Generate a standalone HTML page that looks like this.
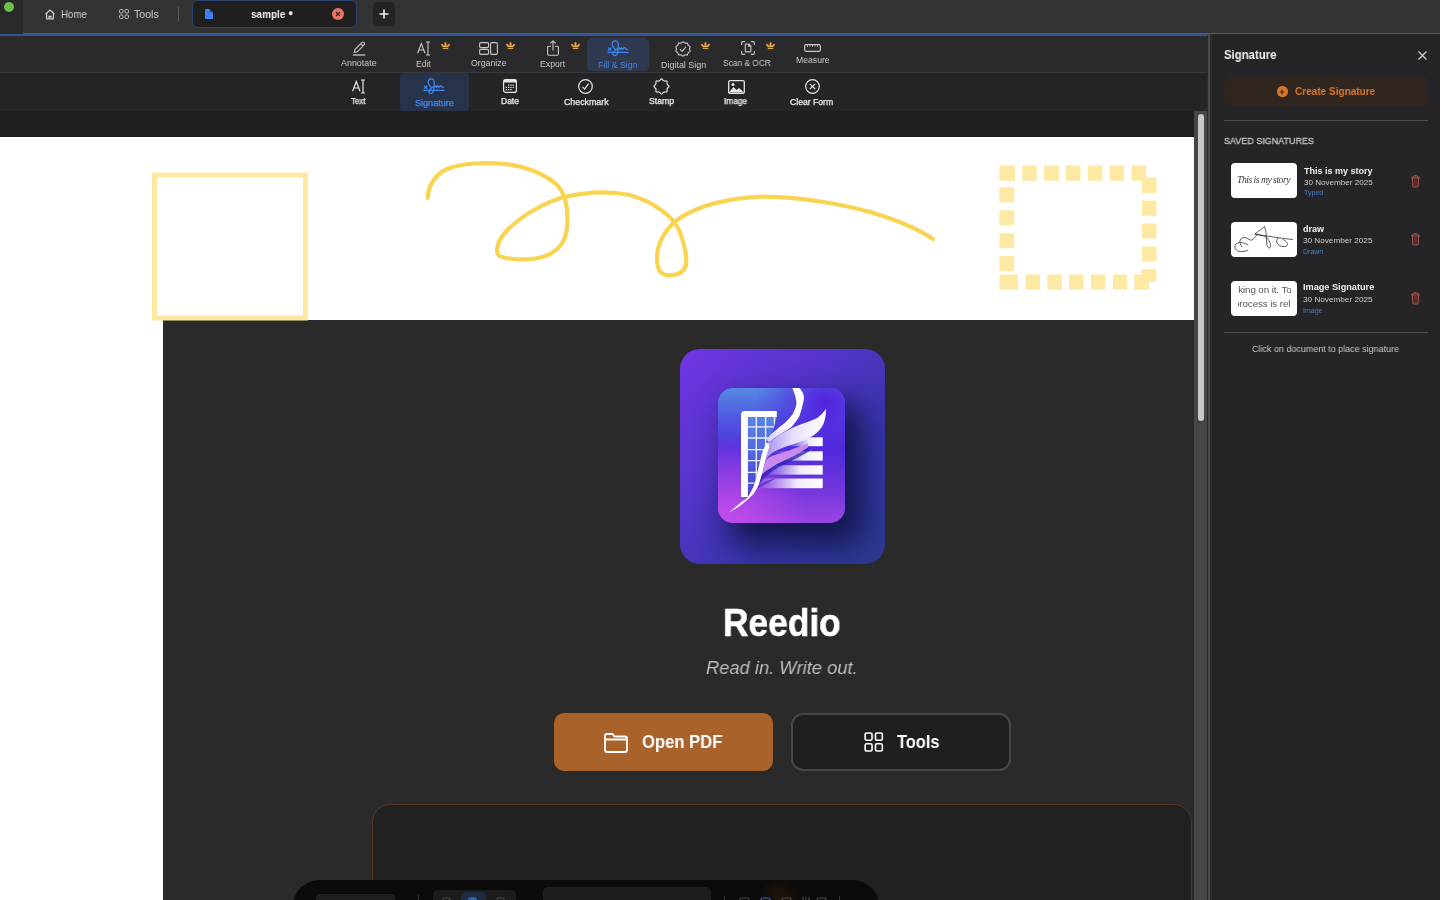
<!DOCTYPE html>
<html><head><meta charset="utf-8">
<style>
*{margin:0;padding:0;box-sizing:border-box}
html,body{width:1440px;height:900px;overflow:hidden;background:#2a2a2a;font-family:"Liberation Sans",sans-serif}
.a{position:absolute}
.t{position:absolute;white-space:nowrap;line-height:1;will-change:transform}
.c{transform:translateX(-50%)}
svg{position:absolute;overflow:visible}
</style></head><body>

<!-- ===== TAB BAR ===== -->
<div class="a" style="left:0;top:0;width:1440px;height:33px;background:#333334"></div>
<div class="a" style="left:0;top:0;width:23px;height:34px;background:#2a2a2a"></div>
<div class="a" style="left:4px;top:2px;width:10px;height:10px;border-radius:50%;background:#6bc04a"></div>
<div class="a" style="left:23px;top:33px;width:1417px;height:1px;background:#5a5a5a"></div>
<div class="a" style="left:0;top:34px;width:1208px;height:2px;background:#2d5598"></div>

<!-- home -->
<svg style="left:44px;top:9px" width="12" height="11" viewBox="0 0 12 11"><path d="M1.5 5.2 L6 1 L10.5 5.2 M2.6 4.3 V10 H9.4 V4.3 M5 10 V7.3 H7 V10 M8.6 2.2 V3.6" fill="none" stroke="#cfcfcf" stroke-width="1.2"/></svg>
<div class="t" id="T_home" style="left:61.33px;top:9.04px;font-size:10.5px;color:#cfcfcf;transform:scaleX(0.9220);transform-origin:0 0">Home</div>
<!-- tools -->
<svg style="left:119px;top:9px" width="10" height="10" viewBox="0 0 10 10"><g fill="none" stroke="#bdbdbd" stroke-width="1"><rect x="0.5" y="0.5" width="3.5" height="3.5" rx="1"/><rect x="6" y="0.5" width="3.5" height="3.5" rx="1"/><rect x="0.5" y="6" width="3.5" height="3.5" rx="1"/><rect x="6" y="6" width="3.5" height="3.5" rx="1"/></g></svg>
<div class="t" id="T_tools" style="left:134.09px;top:9.04px;font-size:10.5px;color:#cfcfcf;transform:scaleX(1.0099);transform-origin:0 0">Tools</div>
<div class="a" style="left:178px;top:7px;width:1px;height:14px;background:#5a5a5a"></div>

<!-- active tab -->
<div class="a" style="left:192px;top:0;width:165px;height:28px;border-radius:6px;background:#1f1f20;border:1px solid #2b4570"></div>
<svg style="left:205px;top:9px" width="8" height="10" viewBox="0 0 8 10"><path d="M0 0.8 Q0 0 0.8 0 H4.6 L8 3.4 V9.2 Q8 10 7.2 10 H0.8 Q0 10 0 9.2 Z" fill="#3a82f5"/><path d="M4.6 0 V3.4 H8" fill="#1f1f20" opacity="0.5"/></svg>
<div class="t" id="T_sample" style="left:251.30px;top:9.06px;font-size:11px;font-weight:bold;color:#f0f0f0;transform:scaleX(0.9077);transform-origin:0 0">sample <span style="font-size:9px;position:relative;top:-2px">●</span></div>
<div class="a" style="left:332px;top:8px;width:12px;height:12px;border-radius:50%;background:#ee7466"></div>
<svg style="left:335px;top:11px" width="6" height="6" viewBox="0 0 6 6"><path d="M1 1 L5 5 M5 1 L1 5" stroke="#3a1a18" stroke-width="1.3"/></svg>
<div class="a" style="left:373px;top:2px;width:22px;height:24px;border-radius:5px;background:#232323"></div>
<svg style="left:379px;top:9px" width="10" height="10" viewBox="0 0 10 10"><path d="M5 0.5 V9.5 M0.5 5 H9.5" stroke="#f0f0f0" stroke-width="1.6"/></svg>

<!-- ===== TOOLBAR ===== -->
<div class="a" style="left:0;top:36px;width:1208px;height:36px;background:#2a2a2c"></div>
<div class="a" style="left:0;top:72px;width:1208px;height:1px;background:#3a3a3c"></div>
<div class="a" style="left:0;top:73px;width:1208px;height:38px;background:#252527"></div>
<div class="a" style="left:0;top:111px;width:1194px;height:26px;background:#1f1f1f"></div>

<!-- row 1 -->
<div class="a" style="left:587px;top:38px;width:62px;height:33px;border-radius:5px;background:#2f3a50"></div>
<div id="row1">
<!-- annotate -->
<svg style="left:352px;top:41px" width="14" height="15" viewBox="0 0 14 15"><g fill="none" stroke="#c8c8c8" stroke-width="1.1" stroke-linejoin="round"><path d="M2.2 11.5 L3 8.3 L10 1.3 Q10.8 0.6 11.6 1.3 L12.4 2.1 Q13.1 2.9 12.4 3.7 L5.4 10.7 Z M8.7 2.6 L11.1 5"/><path d="M0.8 14 H13.2" stroke-width="1.3"/></g></svg>
<div class="t" id="T_annot" style="left:341.19px;top:58.95px;font-size:8.5px;color:#c8c8c8;transform:scaleX(1.0475);transform-origin:0 0">Annotate</div>
<!-- edit -->
<svg style="left:417px;top:41px" width="14" height="15" viewBox="0 0 14 15"><g fill="none" stroke="#c8c8c8" stroke-width="1.1"><path d="M0.6 12.3 L4.3 2.5 L8 12.3 M1.8 9 H6.8"/><path d="M11 1 V14 M9 1 H13 M9 14 H13"/></g></svg>
<div class="t" id="T_edit" style="left:416.20px;top:59.95px;font-size:8.5px;color:#c8c8c8;transform:scaleX(1.0000);transform-origin:0 0">Edit</div>
<!-- organize -->
<svg style="left:479px;top:42px" width="19" height="13" viewBox="0 0 19 13"><g fill="none" stroke="#c8c8c8" stroke-width="1.1"><rect x="0.6" y="0.6" width="9" height="5" rx="1.3"/><rect x="0.6" y="7.4" width="9" height="5" rx="1.3"/><rect x="11.6" y="0.6" width="6.8" height="11.8" rx="1.3"/></g></svg>
<div class="t" id="T_org" style="left:471.09px;top:59.15px;font-size:8.5px;color:#c8c8c8;transform:scaleX(1.0302);transform-origin:0 0">Organize</div>
<!-- export -->
<svg style="left:547px;top:40px" width="12" height="16" viewBox="0 0 12 16"><g fill="none" stroke="#c8c8c8" stroke-width="1.1" stroke-linejoin="round"><path d="M4 6.2 H1.8 Q0.6 6.2 0.6 7.4 V14 Q0.6 15.2 1.8 15.2 H10.2 Q11.4 15.2 11.4 14 V7.4 Q11.4 6.2 10.2 6.2 H8"/><path d="M6 10.5 V0.8 M3.3 3.4 L6 0.8 L8.7 3.4"/></g></svg>
<div class="t" id="T_export" style="left:540.32px;top:59.65px;font-size:8.5px;color:#c8c8c8;transform:scaleX(1.0248);transform-origin:0 0">Export</div>
<!-- fill & sign -->
<svg id="sig1" style="left:600px;top:36px" width="30" height="22" viewBox="0 0 30 22"><g fill="none" stroke="#3f87f0" stroke-width="1.25" stroke-linecap="round" stroke-linejoin="round"><path d="M8 16.4 H28"/><path d="M8.5 11.9 L10.9 14.3 M10.9 11.9 L8.5 14.3"/><path d="M15.6 13.7 C13.5 11.5 12 9.5 12.2 8.1 C12.3 5.5 13.5 4.8 15 4.8 C16.8 4.8 18.3 6.5 18.3 8.7 C18.3 11.5 18 14.5 17.8 15.3 C17.5 18 16.5 19.5 14.7 19.5 C13.3 19.5 12.8 18.3 13 17.6 C13.5 15.5 15.5 14 17.2 12.8 C18.2 12 19.5 11 20 13.2 C20.3 14.5 20.8 12 21.3 11.7 C22 11.3 22.2 13.5 22.5 13.5 C23 13.3 23.8 11.6 24.4 11.6 C25 11.7 25.5 13.2 26 13.2 C26.6 13.3 27 13.1 27.5 13.4"/></g></svg>
<div class="t" id="T_fill" style="left:598.48px;top:61.35px;font-size:8.5px;color:#3f87f0;transform:scaleX(1.0334);transform-origin:0 0">Fill &amp; Sign</div>
<!-- digital sign -->
<svg style="left:675px;top:40.5px" width="16" height="16" viewBox="0 0 16 16"><g fill="none" stroke="#c8c8c8" stroke-width="1.1" stroke-linejoin="round"><path d="M8 0.7 L10 2.1 L12.4 2 L13.2 4.3 L15.2 5.6 L14.5 8 L15.2 10.4 L13.2 11.7 L12.4 14 L10 13.9 L8 15.3 L6 13.9 L3.6 14 L2.8 11.7 L0.8 10.4 L1.5 8 L0.8 5.6 L2.8 4.3 L3.6 2 L6 2.1 Z"/><path d="M5 8.2 L7.1 10.3 L11 5.9"/></g></svg>
<div class="t" id="T_dig" style="left:660.56px;top:60.55px;font-size:8.5px;color:#c8c8c8;transform:scaleX(1.0515);transform-origin:0 0">Digital Sign</div>
<!-- scan -->
<svg style="left:741px;top:41px" width="14" height="14" viewBox="0 0 14 14"><g fill="none" stroke="#c8c8c8" stroke-width="1.1" stroke-linejoin="round"><path d="M0.6 4 V2 Q0.6 0.6 2 0.6 H4 M10 0.6 H12 Q13.4 0.6 13.4 2 V4 M13.4 10 V12 Q13.4 13.4 12 13.4 H10 M4 13.4 H2 Q0.6 13.4 0.6 12 V10"/><path d="M4.3 3.5 Q4.3 3 4.8 3 H7.8 L9.8 5 V10.3 Q9.8 10.9 9.2 10.9 H4.8 Q4.3 10.9 4.3 10.3 Z M7.6 3 V5.2 H9.8"/></g></svg>
<div class="t" id="T_scan" style="left:723.40px;top:58.65px;font-size:8.5px;color:#c8c8c8;transform:scaleX(0.9838);transform-origin:0 0">Scan &amp; OCR</div>
<!-- measure -->
<svg style="left:804px;top:44px" width="17" height="8" viewBox="0 0 17 8"><g fill="none" stroke="#c8c8c8" stroke-width="1.2"><rect x="0.7" y="0.7" width="15.6" height="6.6" rx="1.2"/><path d="M3.5 1 V3 M6 1 V2.6 M8.5 1 V3 M11 1 V2.6 M13.5 1 V3" stroke-width="0.8"/></g></svg>
<div class="t" id="T_meas" style="left:796.19px;top:55.85px;font-size:8.5px;color:#c8c8c8;transform:scaleX(1.0187);transform-origin:0 0">Measure</div>
<!-- crowns -->
<svg style="left:441.3px;top:41.9px" width="9" height="7.2" viewBox="0 0 9 7.2"><g fill="#e8a93e"><circle cx="0.9" cy="2.6" r="0.85"/><circle cx="4.5" cy="0.9" r="0.85"/><circle cx="8.1" cy="2.6" r="0.85"/><path d="M0.1 2.8 L1.7 2.4 L3.4 4 L3.65 0.9 H5.35 L5.6 4 L7.3 2.4 L8.9 2.8 L7.3 5.1 H1.7 Z"/><rect x="1.8" y="5.7" width="5.4" height="1.3"/></g></svg>
<svg style="left:506.2px;top:41.9px" width="9" height="7.2" viewBox="0 0 9 7.2"><g fill="#e8a93e"><circle cx="0.9" cy="2.6" r="0.85"/><circle cx="4.5" cy="0.9" r="0.85"/><circle cx="8.1" cy="2.6" r="0.85"/><path d="M0.1 2.8 L1.7 2.4 L3.4 4 L3.65 0.9 H5.35 L5.6 4 L7.3 2.4 L8.9 2.8 L7.3 5.1 H1.7 Z"/><rect x="1.8" y="5.7" width="5.4" height="1.3"/></g></svg>
<svg style="left:571.0px;top:41.9px" width="9" height="7.2" viewBox="0 0 9 7.2"><g fill="#e8a93e"><circle cx="0.9" cy="2.6" r="0.85"/><circle cx="4.5" cy="0.9" r="0.85"/><circle cx="8.1" cy="2.6" r="0.85"/><path d="M0.1 2.8 L1.7 2.4 L3.4 4 L3.65 0.9 H5.35 L5.6 4 L7.3 2.4 L8.9 2.8 L7.3 5.1 H1.7 Z"/><rect x="1.8" y="5.7" width="5.4" height="1.3"/></g></svg>
<svg style="left:700.9px;top:41.9px" width="9" height="7.2" viewBox="0 0 9 7.2"><g fill="#e8a93e"><circle cx="0.9" cy="2.6" r="0.85"/><circle cx="4.5" cy="0.9" r="0.85"/><circle cx="8.1" cy="2.6" r="0.85"/><path d="M0.1 2.8 L1.7 2.4 L3.4 4 L3.65 0.9 H5.35 L5.6 4 L7.3 2.4 L8.9 2.8 L7.3 5.1 H1.7 Z"/><rect x="1.8" y="5.7" width="5.4" height="1.3"/></g></svg>
<svg style="left:765.5px;top:41.9px" width="9" height="7.2" viewBox="0 0 9 7.2"><g fill="#e8a93e"><circle cx="0.9" cy="2.6" r="0.85"/><circle cx="4.5" cy="0.9" r="0.85"/><circle cx="8.1" cy="2.6" r="0.85"/><path d="M0.1 2.8 L1.7 2.4 L3.4 4 L3.65 0.9 H5.35 L5.6 4 L7.3 2.4 L8.9 2.8 L7.3 5.1 H1.7 Z"/><rect x="1.8" y="5.7" width="5.4" height="1.3"/></g></svg>
</div>

<!-- row 2 -->
<div class="a" style="left:400px;top:73px;width:68.5px;height:38px;border-radius:4px;background:#26334a"></div>
<!-- text -->
<svg style="left:352px;top:78.5px" width="14" height="15" viewBox="0 0 14 15"><g fill="none" stroke="#e6e6e6" stroke-width="1.2"><path d="M0.6 12.3 L4.3 2.5 L8 12.3 M1.8 9 H6.8"/><path d="M11 1 V14 M9 1 H13 M9 14 H13"/></g></svg>
<div class="t" id="T_text" style="left:351.33px;top:97.15px;font-size:8.5px;color:#ececec;transform:scaleX(0.9328);transform-origin:0 0;-webkit-text-stroke:0.25px currentColor">Text</div>
<!-- signature -->
<svg style="left:416.2px;top:74px" width="30" height="22" viewBox="0 0 30 22"><g fill="none" stroke="#3f87f0" stroke-width="1.25" stroke-linecap="round" stroke-linejoin="round"><path d="M8 16.4 H28"/><path d="M8.5 11.9 L10.9 14.3 M10.9 11.9 L8.5 14.3"/><path d="M15.6 13.7 C13.5 11.5 12 9.5 12.2 8.1 C12.3 5.5 13.5 4.8 15 4.8 C16.8 4.8 18.3 6.5 18.3 8.7 C18.3 11.5 18 14.5 17.8 15.3 C17.5 18 16.5 19.5 14.7 19.5 C13.3 19.5 12.8 18.3 13 17.6 C13.5 15.5 15.5 14 17.2 12.8 C18.2 12 19.5 11 20 13.2 C20.3 14.5 20.8 12 21.3 11.7 C22 11.3 22.2 13.5 22.5 13.5 C23 13.3 23.8 11.6 24.4 11.6 C25 11.7 25.5 13.2 26 13.2 C26.6 13.3 27 13.1 27.5 13.4"/></g></svg>
<div class="t" id="T_sig" style="left:415.10px;top:98.55px;font-size:8.5px;color:#3f87f0;transform:scaleX(1.0670);transform-origin:0 0;-webkit-text-stroke:0.25px currentColor">Signature</div>
<!-- date -->
<svg style="left:503px;top:79px" width="14" height="14" viewBox="0 0 14 14"><rect x="0.6" y="0.6" width="12.8" height="12.8" rx="2" fill="none" stroke="#e6e6e6" stroke-width="1.2"/><rect x="0.6" y="0.6" width="12.8" height="3" rx="1" fill="#e6e6e6"/><g fill="#e6e6e6"><rect x="5" y="5.5" width="1.3" height="1.2"/><rect x="7.3" y="5.5" width="1.3" height="1.2"/><rect x="9.6" y="5.5" width="1.3" height="1.2"/><rect x="2.7" y="7.8" width="1.3" height="1.2"/><rect x="5" y="7.8" width="1.3" height="1.2"/><rect x="7.3" y="7.8" width="1.3" height="1.2"/><rect x="9.6" y="7.8" width="1.3" height="1.2"/><rect x="2.7" y="10" width="1.3" height="1.2"/><rect x="5" y="10" width="1.3" height="1.2"/><rect x="7.3" y="10" width="1.3" height="1.2"/></g></svg>
<div class="t" id="T_date" style="left:501.10px;top:97.35px;font-size:8.5px;color:#ececec;transform:scaleX(1.0000);transform-origin:0 0;-webkit-text-stroke:0.25px currentColor">Date</div>
<!-- checkmark -->
<svg style="left:578px;top:78.5px" width="15" height="15" viewBox="0 0 15 15"><circle cx="7.5" cy="7.5" r="6.8" fill="none" stroke="#e6e6e6" stroke-width="1.2"/><path d="M4.5 7.8 L6.6 10 L10.6 4.6" fill="none" stroke="#e6e6e6" stroke-width="1.2"/></svg>
<div class="t" id="T_check" style="left:563.69px;top:97.55px;font-size:8.5px;color:#ececec;transform:scaleX(1.0370);transform-origin:0 0;-webkit-text-stroke:0.25px currentColor">Checkmark</div>
<!-- stamp -->
<svg style="left:652.6px;top:77.5px" width="17" height="17" viewBox="0 0 17 17"><path d="M7.45 1.76 Q8.50 0.10 9.55 1.76 Q10.60 3.42 12.52 2.99 Q14.44 2.56 14.01 4.48 Q13.58 6.40 15.24 7.45 Q16.90 8.50 15.24 9.55 Q13.58 10.60 14.01 12.52 Q14.44 14.44 12.52 14.01 Q10.60 13.58 9.55 15.24 Q8.50 16.90 7.45 15.24 Q6.40 13.58 4.48 14.01 Q2.56 14.44 2.99 12.52 Q3.42 10.60 1.76 9.55 Q0.10 8.50 1.76 7.45 Q3.42 6.40 2.99 4.48 Q2.56 2.56 4.48 2.99 Q6.40 3.42 7.45 1.76 Z" fill="none" stroke="#e6e6e6" stroke-width="1.2" stroke-linejoin="round"/></svg>
<div class="t" id="T_stamp" style="left:648.72px;top:97.45px;font-size:8.5px;color:#ececec;transform:scaleX(1.0248);transform-origin:0 0;-webkit-text-stroke:0.25px currentColor">Stamp</div>
<!-- image -->
<svg style="left:728px;top:79.5px" width="17" height="14" viewBox="0 0 17 14"><rect x="0.7" y="0.7" width="15.6" height="12.6" rx="1.3" fill="none" stroke="#e6e6e6" stroke-width="1.3"/><path d="M1 12.5 L5.5 7 L8.5 10 L11 8 L16 12.5 Z" fill="#e6e6e6"/><circle cx="5" cy="4.5" r="1.5" fill="#e6e6e6"/></svg>
<div class="t" id="T_image" style="left:724.48px;top:96.55px;font-size:8.5px;color:#ececec;transform:scaleX(0.9688);transform-origin:0 0;-webkit-text-stroke:0.25px currentColor">Image</div>
<!-- clear form -->
<svg style="left:804.5px;top:78.5px" width="15" height="15" viewBox="0 0 15 15"><circle cx="7.5" cy="7.5" r="6.8" fill="none" stroke="#e6e6e6" stroke-width="1.2"/><path d="M4.8 4.8 L10.2 10.2 M10.2 4.8 L4.8 10.2" fill="none" stroke="#e6e6e6" stroke-width="1.2"/></svg>
<div class="t" id="T_clear" style="left:789.79px;top:97.55px;font-size:8.5px;color:#ececec;transform:scaleX(1.0143);transform-origin:0 0;-webkit-text-stroke:0.25px currentColor">Clear Form</div>

<!-- ===== DOCUMENT ===== -->
<div class="a" style="left:0;top:137px;width:1194px;height:763px;background:#ffffff"></div>
<div class="a" style="left:0;top:136px;width:1194px;height:1px;background:#161616"></div>
<div class="a" style="left:0;top:138.5px;width:1194px;height:1.5px;background:#f3f3f3"></div>
<div class="a" id="darkimg" style="left:163px;top:320px;width:1031px;height:580px;background:#2a2a2a;overflow:hidden">
  <!-- app icon -->
  <div class="a" style="left:516.6px;top:28.8px;width:205px;height:215px;border-radius:20px;overflow:hidden;background:linear-gradient(135deg,#7135e4 0%,#5234c8 40%,#3435a6 70%,#2b3a8c 100%)"><div class="a" style="left:38.8px;top:39px;width:127px;height:135px;border-radius:15px;box-shadow:14px 18px 30px 4px rgba(16,20,70,0.9)"></div></div>
  
  <div class="a" style="left:555.4px;top:67.8px;width:127px;height:135px;border-radius:15px;background:linear-gradient(180deg,#5688e2 0%,#4f5ae0 22%,#5030dc 45%,#6a34dc 70%,#9a44e0 100%);overflow:hidden">
    <svg style="left:0;top:0" width="127" height="135" viewBox="0 0 127 135">
      <defs>
        <linearGradient id="lg1" x1="0" y1="0" x2="1" y2="0"><stop offset="0" stop-color="#ffffff" stop-opacity="0"/><stop offset="0.6" stop-color="#ffffff" stop-opacity="0.9"/><stop offset="1" stop-color="#ffffff"/></linearGradient>
        <linearGradient id="fgA" x1="0" y1="1" x2="0.3" y2="0"><stop offset="0" stop-color="#d8c8ff"/><stop offset="0.5" stop-color="#ffffff"/><stop offset="1" stop-color="#ffffff"/></linearGradient>
        <linearGradient id="fgB" x1="0" y1="0" x2="1" y2="0"><stop offset="0" stop-color="#a890f0"/><stop offset="0.45" stop-color="#e8e0ff"/><stop offset="1" stop-color="#ffffff"/></linearGradient>
        <linearGradient id="gridg" x1="0" y1="0" x2="0" y2="1"><stop offset="0" stop-color="#5a86e8"/><stop offset="1" stop-color="#4a3ed8"/></linearGradient>
        <radialGradient id="tr" cx="0.85" cy="0.1" r="0.55"><stop offset="0" stop-color="#5418e0" stop-opacity="0.9"/><stop offset="1" stop-color="#5418e0" stop-opacity="0"/></radialGradient>
        <radialGradient id="bl" cx="0.05" cy="1" r="0.65"><stop offset="0" stop-color="#c64cee" stop-opacity="0.95"/><stop offset="1" stop-color="#c64cee" stop-opacity="0"/></radialGradient>
        <clipPath id="gclip"><path d="M29.9 29 H58.8 L54 45.4 L48.7 54.7 L43.2 68.7 L39.4 84.3 L36.2 96.7 L30 109 Z"/></clipPath>
      </defs>
      <rect width="127" height="135" fill="url(#tr)"/>
      <rect width="127" height="135" fill="url(#bl)"/>
      <g clip-path="url(#gclip)">
        <rect x="29" y="28" width="31" height="82" fill="url(#gridg)"/>
        <g stroke="#f0f2ff" stroke-width="1.3">
          <path d="M38.3 29 V110 M47.6 29 V110 M56.5 29 V110"/>
          <path d="M29 38.9 H60 M29 50 H60 M29 61.7 H60 M29 72.6 H60 M29 84.3 H60 M29 95.2 H60"/>
        </g>
      </g>
      <path d="M23 109 V27 Q23 22.9 27 22.9 H58.8 V29 H29.9 V109 Z" fill="#ffffff"/>
      <rect x="70" y="49.3" width="34.7" height="8.9" fill="url(#lg1)"/>
      <rect x="58" y="63.3" width="46.7" height="9.3" fill="url(#lg1)"/>
      <rect x="48" y="77.3" width="56.7" height="9.3" fill="url(#lg1)"/>
      <rect x="40" y="90.5" width="64.7" height="9.7" fill="url(#lg1)"/>
      <path d="M43.2 87.4 C50 81 60 75 71.2 70.3 C78 67 84 63 90 59.4 L91 63.5 C80 70 66 76 56 82 C50 86 46 90 41 96 Z" fill="#2a26b0" opacity="0.75"/>
      <path d="M40 98 C46 94 52 91 58 90.5 L40 100 Z" fill="#2a26b0" opacity="0.6"/>
      <path d="M48 71.9 C52 68.5 57 66.5 62 65.6 C68 63.5 74 61 79 59.4 C83 58 87 56.5 90 55.5 C89.5 57 90 58 90 59.4 C84 63 78 66.5 71.2 70.3 C65 73 60 75.5 55.7 78 C50 81.5 46 84 43.2 87.4 Z" fill="#c88aee"/>
      <path d="M50.2 56.3 C55 51 60 47 66.6 43.9 C72 41 78 38 83.7 36 C90 33.5 95 32 99.2 29.9 C103 27 106 24 108.2 20.5 C108 27 107 32 105.4 36 C103 41 100 44 96 47 C92 50 88 52 83.7 53.2 C79 55 74 56.5 69.7 57.9 C64 60 59 61.5 55.7 64 C52 66 50 68.5 48 71.9 Z" fill="url(#fgB)"/>
      <path d="M74.3 0 L81.3 0 C86 5 87 10 85.2 14.3 C84 20 83 24 81.3 28.3 C78 34 75 38 71.2 40.7 C66 44 62 46 58.8 48.5 C55 51 53 53 51 54.7 L48.7 51.6 C50.5 49 52 47 54 45.4 C57 43 60 40 63.5 37.6 C68 34 72 30 74.3 26.7 C77 22 79 17 78.2 12.8 C77.5 8 76 4 74.3 0 Z" fill="url(#fgA)"/>
      <path d="M10.6 124.7 C18 121 28 114 35.5 106 C39 101 41 97 41.7 93.6 C43 89 44 86 44.8 82.7 C46 78 47 74 48 70.3 C49 66 50 62 51 59.4 L51 54.7 L48.7 54.7 C46 60 44 64 43.2 68.7 C42 74 40.5 79 39.4 84.3 C38.5 89 37.5 93 36.2 96.7 C34 102 32 106 30 109 C28 111 26.5 112 24.6 113 C20 117 15 121 10.6 124.7 Z" fill="#ffffff"/>
    </svg>
  </div>
  <div class="t" id="T_reedio" style="left:559.58px;top:284.34px;font-size:38.5px;font-weight:bold;color:#ffffff;transform:scaleX(0.9170);transform-origin:0 0;-webkit-text-stroke:0.5px #ffffff">Reedio</div>
  <div class="t" id="T_tag" style="left:543.21px;top:338.39px;font-size:19px;font-style:italic;color:#bdbdbd;transform:scaleX(0.9637);transform-origin:0 0">Read in. Write out.</div>
  <!-- buttons -->
  <div class="a" style="left:391px;top:393px;width:218.5px;height:57.5px;border-radius:10px;background:#a9622a"></div>
  <svg style="left:441px;top:412.5px" width="24" height="20" viewBox="0 0 24 20"><path d="M1 3 Q1 1 3 1 H8.5 L10.5 3.5 H21 Q23 3.5 23 5.5 V17 Q23 19 21 19 H3 Q1 19 1 17 Z M1 6.5 H23" fill="none" stroke="#ffffff" stroke-width="1.8" stroke-linejoin="round"/></svg>
  <div class="t" id="T_open" style="left:479.29px;top:412.49px;font-size:19px;font-weight:bold;color:#ffffff;transform:scaleX(0.8750);transform-origin:0 0">Open PDF</div>
  <div class="a" style="left:627.5px;top:392.5px;width:220px;height:58.3px;border-radius:12px;background:#1f1f1f;border:2px solid #484848"></div>
  <svg style="left:700.5px;top:412px" width="19.5" height="20" viewBox="0 0 20 21"><g fill="none" stroke="#ffffff" stroke-width="1.7"><rect x="1" y="1" width="7.2" height="7.6" rx="1.6"/><rect x="11.8" y="1" width="7.2" height="7.6" rx="1.6"/><rect x="1" y="12.4" width="7.2" height="7.6" rx="1.6"/><rect x="11.8" y="12.4" width="7.2" height="7.6" rx="1.6"/></g></svg>
  <div class="t" id="T_toolsb" style="left:734.02px;top:411.99px;font-size:19px;font-weight:bold;color:#ffffff;transform:scaleX(0.8614);transform-origin:0 0">Tools</div>
  <!-- bottom card -->
  <div class="a" style="left:208.5px;top:484px;width:820.5px;height:200px;border-radius:18px;background:#212121;border:1.5px solid #553820"></div>
  <!-- floating bar -->
  <div class="a" style="left:130px;top:560px;width:586px;height:60px;border-radius:26px;background:#0b0b0b"></div>
  <div class="a" style="left:153px;top:574px;width:79px;height:20px;border-radius:4px;background:#1f1f1f"></div>
  <div class="a" style="left:255px;top:575px;width:1px;height:20px;background:#333"></div>
  <div class="a" style="left:269.5px;top:570px;width:83px;height:20px;border-radius:5px;background:#1c1c1c"></div>
  <div class="a" style="left:298px;top:572px;width:25px;height:20px;border-radius:4px;background:#1d2a40"></div>
  <div class="a" style="left:379.5px;top:566.5px;width:168px;height:20px;border-radius:5px;background:#1d1d1d"></div>
  <div class="a" style="left:560.5px;top:576px;width:1px;height:20px;background:#333"></div>
  <div class="a" style="left:676px;top:576px;width:1px;height:20px;background:#333"></div>
  <div class="a" style="left:600px;top:560px;width:40px;height:30px;border-radius:10px;background:radial-gradient(circle at 40% 60%,rgba(110,55,10,0.22),rgba(110,55,10,0) 70%)"></div><svg style="left:575.5px;top:573px" width="90" height="10" viewBox="0 0 90 10"><g fill="none" stroke="#4a4a4a" stroke-width="1.2"><rect x="1" y="5" width="9" height="8" rx="1.5"/><rect x="22" y="5" width="9" height="8" rx="1.5" stroke="#3a6ab8"/><rect x="43" y="5" width="9" height="8" rx="1.5"/><path d="M64 4 V10 M67 4 V10 M70 4 V10"/><rect x="78" y="5" width="9" height="8" rx="1.5"/></g></svg><svg style="left:278px;top:572px" width="80" height="10" viewBox="0 0 80 10"><g fill="none" stroke="#4a4a4a" stroke-width="1.2"><rect x="2" y="6" width="7" height="8" rx="1.5"/><rect x="56" y="6" width="7" height="8" rx="1.5"/></g><rect x="27" y="5" width="9" height="8" rx="3" fill="#2f5fb0"/></svg>
</div>
<!-- yellow annotations -->
<svg style="left:0;top:0" width="1194" height="900" viewBox="0 0 1194 900">
  <rect x="154.5" y="175" width="151" height="143" fill="none" stroke="#fde8a0" stroke-width="5"/>
  <path d="M427.7 197.9 C428 188 433 176 447 169 C462 163 485 162 504 164 C524 166 542 173 555 183 C565 192 568 208 567.3 223 C567 238 562 248 548 255 C536 260 516 261 502 257 C495 255 496 247 501 238 C512 222 535 207 560 198 C580 193 605 190 628.7 194.8 C652 201 672 215 679 230 C685 244 687 258 686 265 C684 273 676 275.5 668 275.4 C660 275 657 268 657 258 C657 244 665 228 680 218 C700 205 730 198 763.6 196.7 C800 197 842 204 870 212 C900 221 920 230 933 239" fill="none" stroke="#f8d450" stroke-width="4.2" stroke-linecap="round" stroke-linejoin="round"/>
  <g fill="#fde9a3" id="dashes"><rect x="999.4" y="165.5" width="15.6" height="15.3"/><rect x="1022.3" y="165.5" width="14.5" height="15.3"/><rect x="1044.0" y="165.5" width="14.9" height="15.3"/><rect x="1065.8" y="165.5" width="14.8" height="15.3"/><rect x="1087.9" y="165.5" width="14.5" height="15.3"/><rect x="1109.7" y="165.5" width="14.5" height="15.3"/><rect x="1131.6" y="165.5" width="14.5" height="15.3"/><rect x="1141.9" y="177.6" width="14.6" height="15.3"/><rect x="1141.9" y="200.6" width="14.6" height="15.2"/><rect x="1141.9" y="223.5" width="14.6" height="15.0"/><rect x="1141.9" y="246.5" width="14.6" height="15.0"/><rect x="1141.9" y="269.2" width="14.6" height="12.7"/><rect x="1134.4" y="274.4" width="14.8" height="15.3"/><rect x="1112.9" y="274.4" width="14.2" height="15.3"/><rect x="1091.0" y="274.4" width="14.3" height="15.3"/><rect x="1069.0" y="274.4" width="14.5" height="15.3"/><rect x="1047.3" y="274.4" width="14.5" height="15.3"/><rect x="1025.5" y="274.4" width="14.5" height="15.3"/><rect x="999.4" y="274.4" width="18.5" height="15.3"/><rect x="999.4" y="187.3" width="14.8" height="15.0"/><rect x="999.4" y="210.2" width="14.8" height="15.0"/><rect x="999.4" y="233.2" width="14.8" height="15.0"/><rect x="999.4" y="256.1" width="14.8" height="15.0"/></g>
</svg>

<!-- scrollbar + divider -->
<div class="a" style="left:1194px;top:111px;width:13px;height:789px;background:#464646"></div>
<div class="a" style="left:1198px;top:113.5px;width:6px;height:307px;border-radius:3px;background:#c8c8c8"></div>
<div class="a" style="left:1207px;top:35px;width:1px;height:865px;background:#2a2a2a"></div>
<div class="a" style="left:1208px;top:33px;width:2px;height:867px;background:#4a4a4a"></div>
<div class="a" style="left:1210px;top:33px;width:2px;height:867px;background:#2e2e30"></div>

<!-- ===== SIDE PANEL ===== -->
<div class="a" style="left:1212px;top:33px;width:228px;height:867px;background:#252527"></div>
<div class="a" style="left:1208px;top:33px;width:232px;height:1px;background:#5a5a5a"></div>
<div class="t" id="T_ptitle" style="left:1223.77px;top:49.22px;font-size:12.5px;font-weight:bold;color:#f2f2f2;transform:scaleX(0.9092);transform-origin:0 0">Signature</div>
<svg style="left:1418px;top:51px" width="9" height="9" viewBox="0 0 9 9"><path d="M0.5 0.5 L8.5 8.5 M8.5 0.5 L0.5 8.5" stroke="#cfcfcf" stroke-width="1.2"/></svg>
<div class="a" style="left:1224px;top:76px;width:203.5px;height:30px;border-radius:6px;background:#30251f"></div>
<div class="a" style="left:1277px;top:86.2px;width:10.6px;height:10.6px;border-radius:50%;background:#d87a2c"></div>
<svg style="left:1279.3px;top:88.5px" width="6" height="6" viewBox="0 0 6 6"><path d="M3 0.6 V5.4 M0.6 3 H5.4" stroke="#33271f" stroke-width="1.2"/></svg>
<div class="t" id="T_cs" style="left:1295.00px;top:85.96px;font-size:11px;font-weight:bold;color:#d87a2c;transform:scaleX(0.9096);transform-origin:0 0">Create Signature</div>
<div class="a" style="left:1224px;top:120px;width:203.5px;height:1px;background:#4c4c4c"></div>
<div class="t" id="T_saved" style="left:1223.79px;top:136.33px;font-size:9.5px;color:#c4c4c4;transform:scaleX(0.9447);transform-origin:0 0;-webkit-text-stroke:0.3px currentColor">SAVED SIGNATURES</div>

<!-- item 1 -->
<div class="a" style="left:1230.5px;top:163px;width:66px;height:35px;border-radius:4px;background:#ffffff;overflow:hidden">
  <div class="t" style="left:6.5px;top:13px;font-family:'Liberation Serif',serif;font-style:italic;font-size:9.5px;color:#3a3a3a;letter-spacing:-0.5px;transform:scaleX(1.02);transform-origin:0 0">This is my story</div>
</div>
<div class="t" id="T_s1t" style="left:1303.70px;top:166.67px;font-size:9px;font-weight:bold;color:#f0f0f0;transform:scaleX(0.9945);transform-origin:0 0">This is my story</div>
<div class="t" id="T_s1d" style="left:1303.70px;top:178.73px;font-size:8px;color:#cdcdcd;transform:scaleX(1.0090);transform-origin:0 0">30 November 2025</div>
<div class="t" id="T_s1k" style="left:1303.71px;top:189.19px;font-size:7px;color:#4a7cc4;transform:scaleX(1.0129);transform-origin:0 0">Typed</div>
<svg class="trash" style="left:1411px;top:174.9px" width="9" height="12.5" viewBox="0 0 9 12.5"><g fill="none" stroke="#aa564d" stroke-width="1.05" stroke-linejoin="round"><path d="M0.6 3 Q1 1.8 2.2 1.8 Q3 0.4 4.5 0.4 Q6 0.4 6.8 1.8 Q8 1.8 8.4 3 Z"/><path d="M1.4 3.2 L1.8 11 Q1.9 11.9 2.8 11.9 H6.2 Q7.1 11.9 7.2 11 L7.6 3.2"/><path d="M4.5 1 V3" stroke-width="0.6"/></g><rect x="2.6" y="4" width="3.8" height="7" fill="#aa564d" opacity="0.3"/></svg>

<!-- item 2 -->
<div class="a" style="left:1230.5px;top:222px;width:66px;height:35px;border-radius:4px;background:#ffffff;overflow:hidden">
  <svg style="left:0;top:0" width="66" height="35" viewBox="0 0 66 35"><g fill="none" stroke="#2a2a2a" stroke-width="0.75" stroke-linecap="round" stroke-linejoin="round"><path d="M17 28 C12 31 4 30 3.8 25 C3.7 20 11 19 17 23"/><path d="M11 25 C7 20 9 15 14 15.5 C17 16 19 19 21 18 C23 16 25 13 27 12.5"/><path d="M24 12 L33.5 4.7 C36 10 35 18 36 23 C37 27 40 27 39.5 23 C39 19 36 15 33 14 L24 12 C35 14 48 16 61.5 17.5"/><path d="M47 16 C44 19 46 24 52 24.5 C58 25 58 20 52 17.5"/></g></svg>
</div>
<div class="t" id="T_s2t" style="left:1303.09px;top:224.57px;font-size:9px;font-weight:bold;color:#f0f0f0;transform:scaleX(0.9830);transform-origin:0 0">draw</div>
<div class="t" id="T_s2d" style="left:1303.10px;top:237.13px;font-size:8px;color:#cdcdcd;transform:scaleX(1.0206);transform-origin:0 0">30 November 2025</div>
<div class="t" id="T_s2k" style="left:1303.12px;top:248.19px;font-size:7px;color:#4a7cc4;transform:scaleX(0.9911);transform-origin:0 0">Drawn</div>
<svg class="trash" style="left:1411px;top:233.4px" width="9" height="12.5" viewBox="0 0 9 12.5"><g fill="none" stroke="#aa564d" stroke-width="1.05" stroke-linejoin="round"><path d="M0.6 3 Q1 1.8 2.2 1.8 Q3 0.4 4.5 0.4 Q6 0.4 6.8 1.8 Q8 1.8 8.4 3 Z"/><path d="M1.4 3.2 L1.8 11 Q1.9 11.9 2.8 11.9 H6.2 Q7.1 11.9 7.2 11 L7.6 3.2"/><path d="M4.5 1 V3" stroke-width="0.6"/></g><rect x="2.6" y="4" width="3.8" height="7" fill="#aa564d" opacity="0.3"/></svg>

<!-- item 3 -->
<div class="a" style="left:1230.5px;top:280.5px;width:66px;height:35px;border-radius:4px;background:#ffffff;overflow:hidden">
  <div class="a" style="left:7px;top:0;width:53px;height:35px;overflow:hidden"><div class="t" style="left:-2.5px;top:4.5px;font-size:9.8px;color:#555;letter-spacing:-0.1px">rking on it. To</div>
  <div class="t" style="left:-3.5px;top:18.5px;font-size:9.8px;color:#555;letter-spacing:-0.1px">process is rel</div></div>
</div>
<div class="t" id="T_s3t" style="left:1303.00px;top:283.47px;font-size:9px;font-weight:bold;color:#f0f0f0;transform:scaleX(1.0173);transform-origin:0 0">Image Signature</div>
<div class="t" id="T_s3d" style="left:1303.00px;top:295.63px;font-size:8px;color:#cdcdcd;transform:scaleX(1.0234);transform-origin:0 0">30 November 2025</div>
<div class="t" id="T_s3k" style="left:1303.00px;top:306.69px;font-size:7px;color:#4a7cc4;transform:scaleX(1.0000);transform-origin:0 0">Image</div>
<svg class="trash" style="left:1411px;top:291.9px" width="9" height="12.5" viewBox="0 0 9 12.5"><g fill="none" stroke="#aa564d" stroke-width="1.05" stroke-linejoin="round"><path d="M0.6 3 Q1 1.8 2.2 1.8 Q3 0.4 4.5 0.4 Q6 0.4 6.8 1.8 Q8 1.8 8.4 3 Z"/><path d="M1.4 3.2 L1.8 11 Q1.9 11.9 2.8 11.9 H6.2 Q7.1 11.9 7.2 11 L7.6 3.2"/><path d="M4.5 1 V3" stroke-width="0.6"/></g><rect x="2.6" y="4" width="3.8" height="7" fill="#aa564d" opacity="0.3"/></svg>

<div class="a" style="left:1224px;top:332px;width:203.5px;height:1px;background:#4c4c4c"></div>
<div class="t" id="T_click" style="left:1252.00px;top:344.19px;font-size:9.5px;color:#c8c8c8;transform:scaleX(0.9438);transform-origin:0 0">Click on document to place signature</div>

</body></html>
